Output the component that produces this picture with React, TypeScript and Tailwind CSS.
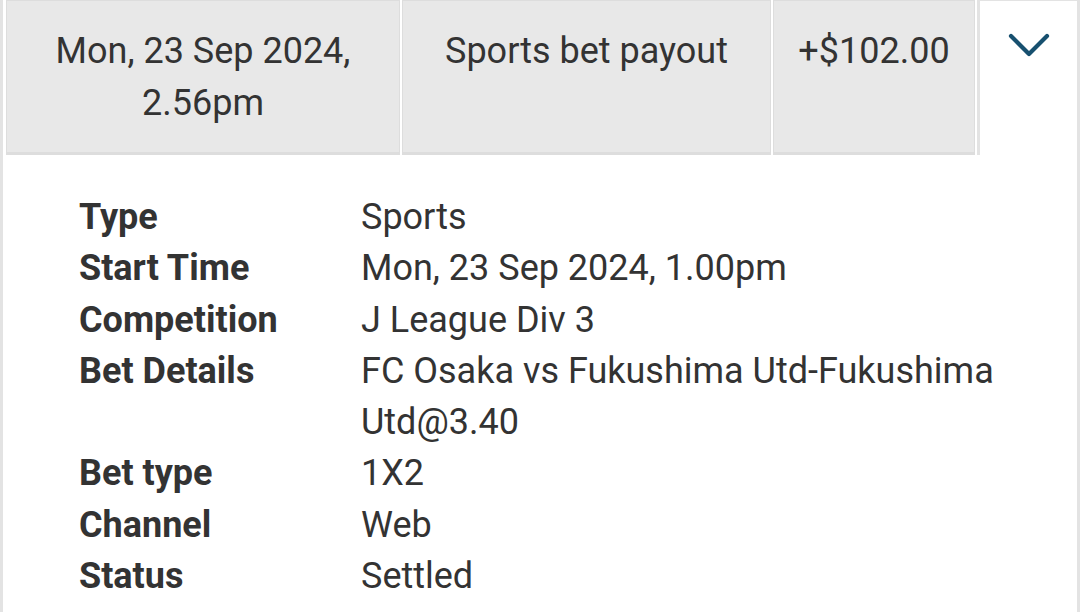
import React from "react";

const rows: [string, string][] = [
  ["Type", "Sports"],
  ["Start Time", "Mon, 23 Sep 2024, 1.00pm"],
  ["Competition", "J League Div 3"],
  ["Bet Details", "FC Osaka vs Fukushima Utd-Fukushima Utd@3.40"],
  ["Bet type", "1X2"],
  ["Channel", "Web"],
  ["Status", "Settled"],
];

export default function App() {
  return (
    <div
      className="w-[1080px] h-[612px] bg-white overflow-hidden border-l-[3px] border-r-[3px] border-[#e3e3e3] text-[#333333]"
      style={{ fontFamily: "Roboto, 'Noto Sans', sans-serif" }}
    >
      <div className="flex h-[155px] pl-[3px] gap-[2px]">
        <div className="w-[394px] bg-[#e8e8e8] border border-[#dddddd] border-b-[3px] text-center text-[36px] leading-[52px] pt-[24px]">
          Mon, 23 Sep 2024,
          <br />
          2.56pm
        </div>
        <div className="w-[369px] bg-[#e8e8e8] border border-[#dddddd] border-b-[3px] text-center text-[36px] leading-[52px] pt-[24px]">
          Sports bet payout
        </div>
        <div className="w-[202px] bg-[#e8e8e8] border border-[#dddddd] border-b-[3px] text-center text-[36px] leading-[52px] pt-[24px]">
          +$102.00
        </div>
        <div className="flex-1 bg-white border-l-[3px] border-t border-[#e3e3e3] flex justify-center pt-[32px]">
          <svg width="42" height="26" viewBox="0 0 42 26" fill="none">
            <path d="M3 3 L21 21 L39 3" stroke="#17506f" strokeWidth="4.2" strokeLinecap="round" strokeLinejoin="round" />
          </svg>
        </div>
      </div>
      <div className="pl-[76px] pt-[37px] text-[36px] leading-[51.3px]">
        {rows.map(([k, v]) => (
          <div key={k} className="flex">
            <div className="w-[282px] font-bold shrink-0">{k}</div>
            <div className="w-[660px]">{v}</div>
          </div>
        ))}
      </div>
    </div>
  );
}
